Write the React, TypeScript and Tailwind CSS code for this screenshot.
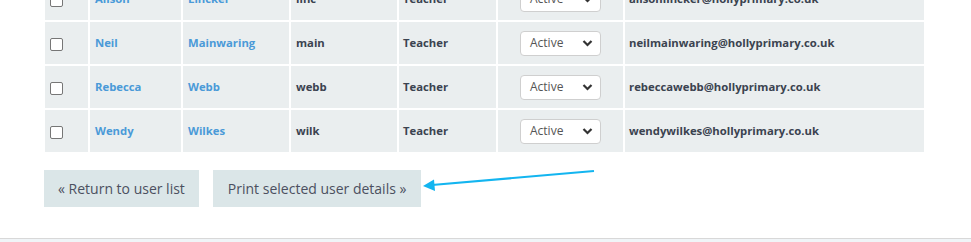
import React from "react";

const rows = [
  { first: "Alison", last: "Lincker", user: "linc", email: "alisonlincker@hollyprimary.co.uk" },
  { first: "Neil", last: "Mainwaring", user: "main", email: "neilmainwaring@hollyprimary.co.uk" },
  { first: "Rebecca", last: "Webb", user: "webb", email: "rebeccawebb@hollyprimary.co.uk" },
  { first: "Wendy", last: "Wilkes", user: "wilk", email: "wendywilkes@hollyprimary.co.uk" },
];

function Chevron() {
  return (
    <svg width="11" height="8" viewBox="0 0 11 8" className="block">
      <path d="M1.5 2 L5.5 6 L9.5 2" fill="none" stroke="#333" strokeWidth="2.2" />
    </svg>
  );
}

export default function App() {
  return (
    <div
      className="relative w-[971px] h-[242px] overflow-hidden bg-white"
      style={{ fontFamily: '"Open Sans", "Liberation Sans", sans-serif' }}
    >
      <div className="flex flex-col h-full">
        <table className="mt-[-24px] ml-[43px] w-[883px] border-separate border-spacing-[2px] text-[11.3px] font-bold">
          <colgroup>
            <col className="w-[43px]" />
            <col className="w-[91px]" />
            <col className="w-[106px]" />
            <col className="w-[106px]" />
            <col className="w-[97px]" />
            <col className="w-[125px]" />
            <col />
          </colgroup>
          <tbody>
            {rows.map((r) => (
              <tr key={r.user} className="h-[42px]">
                <td className="bg-[#eaeeef] pl-[5px] align-middle p-0">
                  <span className="block w-[13px] h-[13px] mt-[2px] rounded-[2px] border border-[#767676] bg-white" />
                </td>
                <td className="bg-[#eaeeef] pl-[5px] text-[#4a9ad8]">{r.first}</td>
                <td className="bg-[#eaeeef] pl-[5px] text-[#4a9ad8]">{r.last}</td>
                <td className="bg-[#eaeeef] pl-[5px] text-[#3b4350]">{r.user}</td>
                <td className="bg-[#eaeeef] pl-[4px] text-[#3b4350]">Teacher</td>
                <td className="bg-[#eaeeef] p-0">
                  <div className="mx-auto flex items-center justify-between w-[81px] h-[25px] rounded-[4px] border border-[#cfcfcf] bg-white pl-[9px] pr-[7px] font-normal text-[12px] text-[#555]">
                    <span className="-mt-[1px]">Active</span>
                    <Chevron />
                  </div>
                </td>
                <td className="bg-[#eaeeef] pl-[4px] text-[#3b4350]">{r.email}</td>
              </tr>
            ))}
          </tbody>
        </table>

        <div className="flex gap-[14px] ml-[44px] mt-[16px]">
          <button className="h-[37px] px-[14px] bg-[#dbe6e8] text-[14px] text-[#4b5060]">
            « Return to user list
          </button>
          <button className="h-[37px] px-[15px] bg-[#dbe6e8] text-[14px] text-[#4b5060]">
            Print selected user details »
          </button>
        </div>

        <div className="mt-auto h-[4px] border-t border-[#d8d8d8] bg-[#f0f4f7]" />
      </div>

      <svg className="absolute left-0 top-0 pointer-events-none" width="971" height="242">
        <line x1="594" y1="171" x2="432" y2="185" stroke="#13b5f0" strokeWidth="2.2" />
        <polygon points="423,186 434,179.5 435,191" fill="#13b5f0" />
      </svg>
    </div>
  );
}
